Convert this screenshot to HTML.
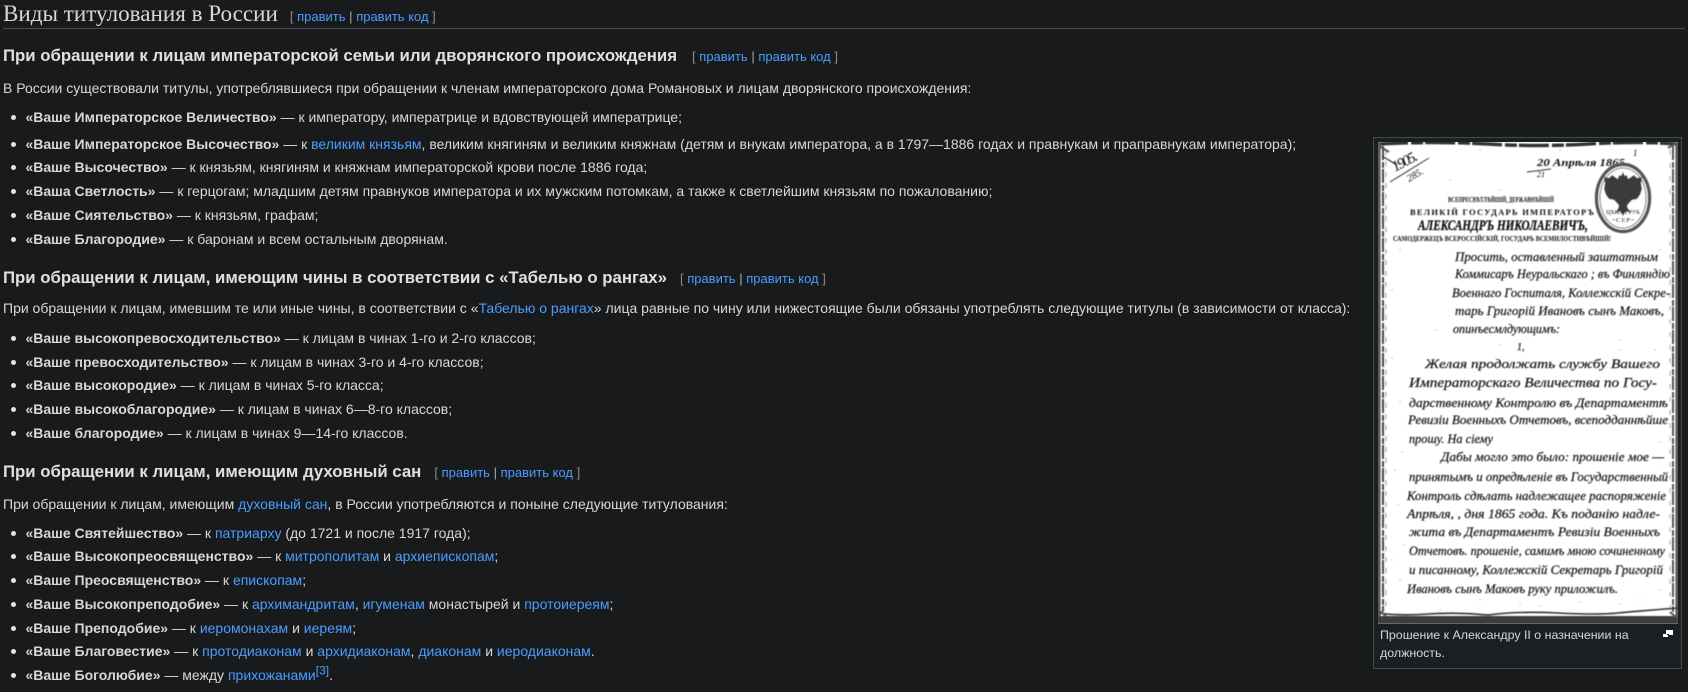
<!DOCTYPE html>
<html lang="ru"><head><meta charset="utf-8"><title>Виды титулования в России</title>
<style>
html,body{margin:0;padding:0;width:1688px;height:692px;overflow:hidden;background:#191a1c}
body{font-family:"Liberation Sans",sans-serif;font-size:14px;color:#d8d8d8;position:relative}
.l{position:absolute;left:3px;white-space:nowrap;line-height:20px}
.i{left:25.5px}
.i:before{content:"";position:absolute;left:-14.5px;top:8px;width:5px;height:5px;border-radius:50%;background:#e4e4e4}
a{color:#4a9dff;text-decoration:none}
b{color:#d8d8d8}
h2,h3{margin:0;font-weight:normal}
h2{position:absolute;left:3px;top:0;font:23.1px/26px "Liberation Serif",serif;color:#d8d8d8;white-space:nowrap}
h3{position:absolute;left:3px;font-size:16.8px;font-weight:bold;line-height:20px;white-space:nowrap;color:#e0e0e0}
.e{font-size:13px;font-weight:normal;font-family:"Liberation Sans",sans-serif;color:#8a8a8a;margin-left:15px}
.e span{color:#aaa}
sup{font-size:12px;line-height:0}
#r{position:absolute;left:3px;top:28px;width:1682px;height:1px;background:#4a4d50}
#f{position:absolute;left:1373px;top:137px;width:309px;height:532px;box-sizing:border-box;background:#1b1f21;border:1px solid #434a4c}
#f #p{position:absolute;left:4px;top:4px}
#c{position:absolute;left:6px;top:489px;width:270px;font-size:12.4px;line-height:17.5px;color:#d8d8d8}
#f #m{position:absolute;left:289px;top:492px;width:10px;height:8px}
</style></head><body>
<h2>Виды титулования в России<span class="e" style="margin-left:12px;position:relative;top:0">[ <a>править</a> <span>|</span> <a>править код</a> ]</span></h2>
<div id="r"></div>

<h3 style="top:46px">При обращении к лицам императорской семьи или дворянского происхождения<span class="e">[ <a>править</a> <span>|</span> <a>править код</a> ]</span></h3>
<div class="l" style="top:78px">В России существовали титулы, употреблявшиеся при обращении к членам императорского дома Романовых и лицам дворянского происхождения:</div>
<div class="l i" style="top:107px"><b>«Ваше Императорское Величество»</b> — к императору, императрице и вдовствующей императрице;</div>
<div class="l i" style="top:134px"><b>«Ваше Императорское Высочество»</b> — к <a>великим князьям</a>, великим княгиням и великим княжнам (детям и внукам императора, а в 1797—1886 годах и правнукам и праправнукам императора);</div>
<div class="l i" style="top:157px"><b>«Ваше Высочество»</b> — к князьям, княгиням и княжнам императорской крови после 1886 года;</div>
<div class="l i" style="top:181px"><b>«Ваша Светлость»</b> — к герцогам; младшим детям правнуков императора и их мужским потомкам, а также к светлейшим князьям по пожалованию;</div>
<div class="l i" style="top:205px"><b>«Ваше Сиятельство»</b> — к князьям, графам;</div>
<div class="l i" style="top:229px"><b>«Ваше Благородие»</b> — к баронам и всем остальным дворянам.</div>

<h3 style="top:268px">При обращении к лицам, имеющим чины в соответствии с «Табелью о рангах»<span class="e" style="margin-left:13px">[ <a>править</a> <span>|</span> <a>править код</a> ]</span></h3>
<div class="l" style="top:298px">При обращении к лицам, имевшим те или иные чины, в соответствии с «<a>Табелью о рангах</a>» лица равные по чину или нижестоящие были обязаны употреблять следующие титулы (в зависимости от класса):</div>
<div class="l i" style="top:328px"><b>«Ваше высокопревосходительство»</b> — к лицам в чинах 1-го и 2-го классов;</div>
<div class="l i" style="top:352px"><b>«Ваше превосходительство»</b> — к лицам в чинах 3-го и 4-го классов;</div>
<div class="l i" style="top:375px"><b>«Ваше высокородие»</b> — к лицам в чинах 5-го класса;</div>
<div class="l i" style="top:399px"><b>«Ваше высокоблагородие»</b> — к лицам в чинах 6—8-го классов;</div>
<div class="l i" style="top:423px"><b>«Ваше благородие»</b> — к лицам в чинах 9—14-го классов.</div>

<h3 style="top:462px">При обращении к лицам, имеющим духовный сан<span class="e" style="margin-left:13px">[ <a>править</a> <span>|</span> <a>править код</a> ]</span></h3>
<div class="l" style="top:494px">При обращении к лицам, имеющим <a>духовный сан</a>, в России употребляются и поныне следующие титулования:</div>
<div class="l i" style="top:523px"><b>«Ваше Святейшество»</b> — к <a>патриарху</a> (до 1721 и после 1917 года);</div>
<div class="l i" style="top:546px"><b>«Ваше Высокопреосвященство»</b> — к <a>митрополитам</a> и <a>архиепископам</a>;</div>
<div class="l i" style="top:570px"><b>«Ваше Преосвященство»</b> — к <a>епископам</a>;</div>
<div class="l i" style="top:594px"><b>«Ваше Высокопреподобие»</b> — к <a>архимандритам</a>, <a>игуменам</a> монастырей и <a>протоиереям</a>;</div>
<div class="l i" style="top:618px"><b>«Ваше Преподобие»</b> — к <a>иеромонахам</a> и <a>иереям</a>;</div>
<div class="l i" style="top:641px"><b>«Ваше Благовестие»</b> — к <a>протодиаконам</a> и <a>архидиаконам</a>, <a>диаконам</a> и <a>иеродиаконам</a>.</div>
<div class="l i" style="top:665px"><b>«Ваше Боголюбие»</b> — между <a>прихожанами</a><sup><a>[3]</a></sup>.</div>

<div id="f">
<svg id="p" width="300" height="482" viewBox="1378 142 300 482" xmlns="http://www.w3.org/2000/svg">
<defs><filter id="bl" x="-5%" y="-5%" width="110%" height="110%"><feGaussianBlur stdDeviation="0.4"/></filter></defs>
<rect x="1378" y="142" width="300" height="482" fill="#fff"/>
<g filter="url(#bl)">
<g fill="none" stroke="#333">
<path d="M1378 144q60-3 110 0t100 0t90 0" stroke-width="3.5" stroke-dasharray="30 3 12 2"/>
<path d="M1379 142V624" stroke="#555" stroke-width="3"/>
<path d="M1383 146V612" stroke-width="2" stroke="#444" stroke-dasharray="14 2 6 1"/>
<path d="M1386 150V610" stroke-width="1" stroke="#999" stroke-dasharray="5 6"/>
<path d="M1677 142V624" stroke="#555" stroke-width="3"/>
<path d="M1673 146V612" stroke-width="2" stroke="#555" stroke-dasharray="14 2 6 1"/>
<path d="M1670 150V610" stroke-width="1" stroke="#aaa" stroke-dasharray="5 8"/>
<path d="M1378 620H1678" stroke="#3c3c3c" stroke-width="8"/>
<path d="M1378 613q20 3 50 1t60 1q30-4 70-2t60 0t60-5" stroke-width="1.6"/>
<path d="M1379 146l10 6M1668 148l8-5M1378 610l8 6M1670 612l7 6" stroke-width="2" stroke="#555"/>
<path d="M1382 156l15 9" stroke-width="1.2"/>
<path d="M1390 182l39-24" stroke-width="1"/>
<path d="M1527 172l24-3" stroke-width="1"/>
</g>
<g fill="none" stroke="#888" stroke-width="1.1" stroke-linecap="round">
<path d="M1400 250h.1M1392 290h.1M1436 330h.1M1392 358h.1M1620 340h.1M1655 350h.1M1395 470h.1M1398 505h.1M1392 560h.1M1400 580h.1M1440 575h.1M1432 530h.1M1480 600h.1M1520 605h.1M1580 602h.1M1640 600h.1M1620 604h.1M1450 180h.1M1500 190h.1M1480 150h.1M1560 150h.1M1660 250h.1M1500 345h.1M1620 350h.1M1400 402h.1M1660 442h.1M1402 452h.1M1404 545h.1M1420 590h.1M1660 590h.1M1440 610h.1M1540 606h.1"/>
</g>
<g fill="#111">
<text x="1395" y="172" font-family="Liberation Serif,serif" font-style="italic" font-size="15" transform="rotate(-28 1395 172)" textLength="27">1905.</text>
<text x="1409" y="182" font-family="Liberation Serif,serif" font-style="italic" font-size="10" transform="rotate(-30 1409 182)">285.</text>
<text x="1537" y="166" font-family="Liberation Serif,serif" font-style="italic" font-weight="bold" font-size="11" textLength="88" lengthAdjust="spacingAndGlyphs">20 Апрѣля 1865</text>
<text x="1537" y="177" font-family="Liberation Serif,serif" font-style="italic" font-size="8">21</text>
<text x="1633" y="156" font-family="Liberation Serif,serif" font-style="italic" font-size="9">1</text>
<ellipse cx="1623" cy="198" rx="26.5" ry="33.5" fill="#fff" stroke="#555" stroke-width="3.4"/>
<ellipse cx="1623" cy="198" rx="23" ry="30" fill="none" stroke="#222" stroke-width="0.8"/>
<path d="M1623 172l2 4 2-1 1 4 6-4 3 3 5-1-1 6 1 6-2 6-3 4-5 1-3 3-2 3 3 7-4-2-3 5-3-5-4 2 3-7-2-3-3-3-5-1-3-4-2-6 1-6-1-6 5 1 3-3 6 4 1-4 2 1z" fill="#3a3a3a"/>
<text x="1606" y="214" font-family="Liberation Serif,serif" font-size="6.5" font-weight="bold" textLength="34" lengthAdjust="spacingAndGlyphs">ЦѢНА 1 РУБ</text>
<text x="1612" y="222" font-family="Liberation Serif,serif" font-size="6" font-weight="bold" textLength="22" lengthAdjust="spacing">~СЕР~</text>
<g font-family="Liberation Serif,serif" font-weight="bold">
<text x="1448" y="202" font-size="7" textLength="106" lengthAdjust="spacingAndGlyphs">ВСЕПРЕСВѢТЛѢЙШІЙ, ДЕРЖАВНѢЙШІЙ</text>
<text x="1410" y="215" font-size="8.5" textLength="184" lengthAdjust="spacing">ВЕЛИКІЙ ГОСУДАРЬ ИМПЕРАТОРЪ</text>
<text x="1418" y="230" font-size="15" font-style="italic" stroke="#111" stroke-width=".3" textLength="170" lengthAdjust="spacingAndGlyphs">АЛЕКСАНДРЪ НИКОЛАЕВИЧЪ,</text>
<text x="1393" y="241" font-size="7" textLength="218" lengthAdjust="spacingAndGlyphs">САМОДЕРЖЕЦЪ ВСЕРОССІЙСКІЙ, ГОСУДАРЬ ВСЕМИЛОСТИВѢЙШІЙ!</text>
</g>
<g font-family="Liberation Serif,serif" font-style="italic" font-size="13" stroke="#111" stroke-width=".2">
<text x="1455" y="261" textLength="203" lengthAdjust="spacingAndGlyphs">Просить, оставленный заштатным</text>
<text x="1455" y="278" textLength="215" lengthAdjust="spacingAndGlyphs">Коммисаръ Неуральскаго ; въ Финляндію</text>
<text x="1452" y="297" textLength="218" lengthAdjust="spacingAndGlyphs">Военнаго Госпиталя, Коллежскій Секре-</text>
<text x="1455" y="315" textLength="209" lengthAdjust="spacingAndGlyphs">тарь Григорій Ивановъ сынъ Маковъ,</text>
<text x="1453" y="333" textLength="107" lengthAdjust="spacingAndGlyphs">опинъесмлдующимъ:</text>
<text x="1517" y="350" font-size="10">1,</text>
<text x="1425" y="368" textLength="235" lengthAdjust="spacingAndGlyphs">Желая продолжать службу Вашего</text>
<text x="1409" y="387" font-size="14" textLength="248" lengthAdjust="spacingAndGlyphs">Императорскаго Величества по Госу-</text>
<text x="1409" y="407" textLength="259" lengthAdjust="spacingAndGlyphs">дарственному Контролю въ Департаментѣ</text>
<text x="1408" y="424" textLength="260" lengthAdjust="spacingAndGlyphs">Ревизіи Военныхъ Отчетовъ, всеподданнѣйше</text>
<text x="1409" y="443" textLength="84" lengthAdjust="spacingAndGlyphs">прошу. На сіему</text>
<text x="1441" y="461" textLength="223" lengthAdjust="spacingAndGlyphs">Дабы могло это было: прошеніе мое —</text>
<text x="1409" y="481" textLength="259" lengthAdjust="spacingAndGlyphs">принятымъ и опредѣленіе въ Государственный</text>
<text x="1407" y="500" textLength="259" lengthAdjust="spacingAndGlyphs">Контроль сдѣлать надлежащее распоряженіе</text>
<text x="1407" y="518" textLength="253" lengthAdjust="spacingAndGlyphs">Апрѣля,  , дня 1865 года. Къ поданію надле-</text>
<text x="1409" y="536" textLength="251" lengthAdjust="spacingAndGlyphs">жита въ Департаментъ Ревизіи Военныхъ</text>
<text x="1409" y="555" textLength="256" lengthAdjust="spacingAndGlyphs">Отчетовъ. прошеніе, самимъ мною сочиненному</text>
<text x="1409" y="574" textLength="254" lengthAdjust="spacingAndGlyphs">и писанному, Коллежскій Секретарь Григорій</text>
<text x="1407" y="593" textLength="211" lengthAdjust="spacingAndGlyphs">Ивановъ сынъ Маковъ руку приложилъ.</text>
</g>
</g>
</g>
</svg>
<div id="c">Прошение к Александру II о назначении на должность.</div>
<svg id="m" viewBox="0 0 10 8" xmlns="http://www.w3.org/2000/svg"><rect x="3" y="0" width="7" height="5" fill="#fff"/><rect x="0" y="4" width="5" height="3" fill="#fff"/><rect x="4" y="4" width="2" height="1" fill="#1b1f21"/></svg>
</div>
</body></html>
